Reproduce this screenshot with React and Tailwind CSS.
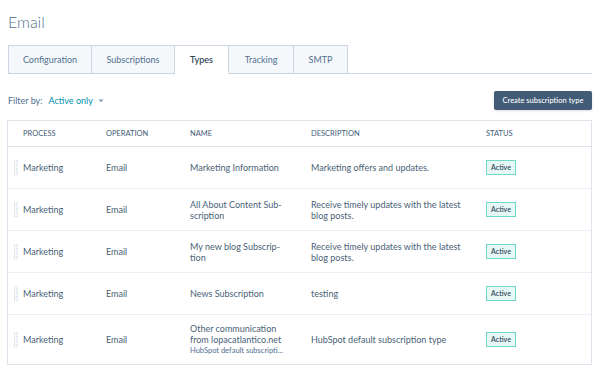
import React from 'react';

const tabs = ['Configuration', 'Subscriptions', 'Types', 'Tracking', 'SMTP'];
const tabWidths = ['w-[84px]', 'w-[83px]', 'w-[54px]', 'w-[65px]', 'w-[54px]'];

const rows = [
  { name: ['Marketing Information'], desc: ['Marketing offers and updates.'], h: 'h-[42px]' },
  { name: ['All About Content Sub-', 'scription'], desc: ['Receive timely updates with the latest', 'blog posts.'], h: 'h-[42px]' },
  { name: ['My new blog Subscrip-', 'tion'], desc: ['Receive timely updates with the latest', 'blog posts.'], h: 'h-[42px]' },
  { name: ['News Subscription'], desc: ['testing'], h: 'h-[42px]' },
  { name: ['Other communication', 'from lopacatlantico.net'], sub: 'HubSpot default subscripti...', desc: ['HubSpot default subscription type'], h: 'h-[49px]', last: true },
];

function DragHandle() {
  return (
    <svg width="4" height="16" viewBox="0 0 4 16" className="shrink-0">
      {[0, 2, 4, 6, 8, 10, 12, 14].map(y => (
        <g key={y}>
          <rect x="0" y={y} width="1.2" height="1.2" fill="#cbd6e2" />
          <rect x="2.4" y={y} width="1.2" height="1.2" fill="#cbd6e2" />
        </g>
      ))}
    </svg>
  );
}

function Lines({ lines }) {
  return lines.map((l, i) => <div key={i}>{l}</div>);
}

export default function App() {
  return (
    <div className="w-[600px] h-[387px] overflow-hidden bg-white px-[8px] pt-[13px] text-[#4a5f76] font-['Lato',_'Liberation_Sans',_sans-serif]">
      <h1 className="text-[16px] leading-[18px] font-light text-[#516f90]">Email</h1>

      {/* Tabs */}
      <div className="mt-[14px] flex border-b border-[#cbd6e2] w-[584px]">
        {tabs.map((t, i) => {
          const active = t === 'Types';
          return (
            <div
              key={t}
              className={`${tabWidths[i]} h-[29px] -mb-px flex items-center justify-center text-[9px] border-t border-r border-[#cbd6e2] ${i === 0 ? 'border-l' : ''} ${active ? 'bg-white border-b border-b-white font-semibold text-[#33475b]' : 'bg-[#f5f8fa] border-b text-[#516f90]'}`}
            >
              {t}
            </div>
          );
        })}
      </div>

      {/* Filter row */}
      <div className="mt-[17px] flex items-center justify-between w-[584px] h-[19px]">
        <div className="flex items-center text-[9px]">
          <span className="text-[#516f90]">Filter by:</span>
          <span className="ml-[6px] text-[#0091ae]">Active only</span>
          <svg width="6" height="4" viewBox="0 0 6 4" className="ml-[5px]">
            <path d="M0.5 0.5 L3 3.2 L5.5 0.5 Z" fill="#7c98b6" />
          </svg>
        </div>
        <button className="w-[98px] h-[19px] rounded-[2px] bg-[#425b76] text-white text-[7.5px] font-medium shadow-sm">
          Create subscription type
        </button>
      </div>

      {/* Table */}
      <div className="mt-[10px] w-[585px] -ml-px border border-[#dfe3eb]">
        <div className="h-[26px] flex items-center text-[7.5px] uppercase text-[#425b76] border-b border-[#dfe3eb] pl-[15px]">
          <div className="w-[83px]">Process</div>
          <div className="w-[84px]">Operation</div>
          <div className="w-[121px]">Name</div>
          <div className="w-[175px]">Description</div>
          <div>Status</div>
        </div>
        {rows.map((r, i) => (
          <div key={i} className={`${r.h} flex items-center text-[9px] leading-[11px] ${r.last ? '' : 'border-b border-[#eaf0f6]'}`}>
            <div className="w-[15px] flex justify-center pl-[1px]">
              <DragHandle />
            </div>
            <div className="w-[83px]">Marketing</div>
            <div className="w-[84px]">Email</div>
            <div className="w-[121px]">
              <Lines lines={r.name} />
              {r.sub && <div className="text-[7.5px] leading-[11px] text-[#516f90]">{r.sub}</div>}
            </div>
            <div className="w-[175px]">
              <Lines lines={r.desc} />
            </div>
            <div>
              <span className="inline-flex items-center justify-center w-[30px] h-[15px] border-[1.5px] border-[#6fd8c9] bg-[#e5f8f6] text-[7px] font-semibold text-[#33475b]">
                Active
              </span>
            </div>
          </div>
        ))}
      </div>
    </div>
  );
}
